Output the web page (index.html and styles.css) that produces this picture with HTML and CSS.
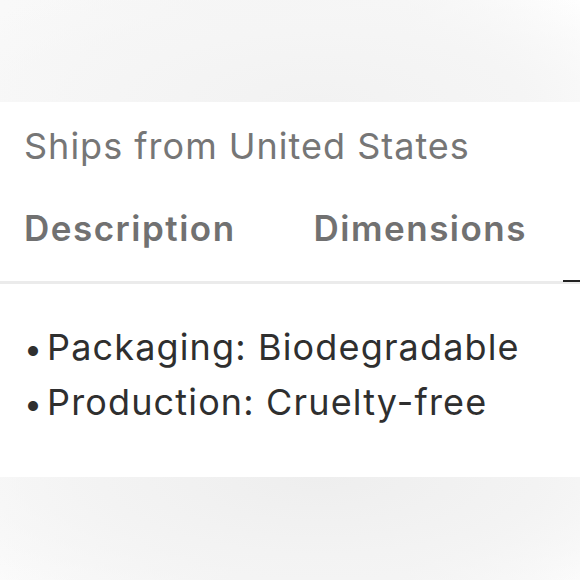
FILE: index.html
```html
<!DOCTYPE html>
<html>
<head>
<meta charset="utf-8">
<link rel="stylesheet" href="styles.css">
</head>
<body>
<div class="page">
  <div class="band band-top"></div>
  <section class="card">
    <p class="ships">Ships from United States</p>
    <nav class="tabs">
      <span class="tab">Description</span>
      <span class="tab">Dimensions</span>
    </nav>
    <div class="divider"><span class="active-line"></span></div>
    <ul class="specs">
      <li><span class="dot">•</span>Packaging: Biodegradable</li>
      <li><span class="dot">•</span>Production: Cruelty-free</li>
    </ul>
  </section>
  <div class="band band-bottom"></div>
</div>
</body>
</html>
```
FILE: styles.css
```css
html, body {
  margin: 0;
  padding: 0;
  background: #ffffff;
}
.page {
  width: 580px;
  height: 580px;
  display: flex;
  flex-direction: column;
  overflow: hidden;
  font-family: "Inter", "Liberation Sans", sans-serif;
}
.band {
  flex: none;
}
.band-top {
  height: 102px;
  background:
    radial-gradient(ellipse 70% 140% at 55% 100%, #f2f2f2 0%, #f5f5f5 50%, rgba(255,255,255,0) 100%),
    linear-gradient(90deg, #f9f9f9 0%, #f6f6f6 40%, #f7f7f7 70%, #ffffff 100%);
}
.band-bottom {
  height: 103px;
  background:
    radial-gradient(ellipse 75% 150% at 55% 0%, #eeeeee 0%, #f3f3f3 50%, rgba(255,255,255,0) 100%),
    linear-gradient(90deg, #fbfbfb 0%, #f6f6f6 40%, #f6f6f6 70%, #fdfdfd 100%);
}
.card {
  flex: 1;
  background: #ffffff;
  display: flex;
  flex-direction: column;
}
.ships {
  margin: 22px 0 0 24px;
  font-size: 36px;
  line-height: 44px;
  letter-spacing: 1px;
  color: #767676;
  font-weight: 400;
}
.tabs {
  display: flex;
  gap: 78px;
  margin: 38px 0 0 24px;
}
.tab {
  font-size: 35px;
  line-height: 44px;
  font-weight: 600;
  letter-spacing: 1.5px;
  color: #717171;
}
.divider {
  margin-top: 31px;
  height: 3px;
  background: #ebebeb;
  position: relative;
}
.active-line {
  position: absolute;
  right: 0;
  top: -1px;
  width: 17px;
  height: 2px;
  background: #222222;
}
.specs {
  list-style: none;
  margin: 36px 0 0 24px;
  padding: 0;
}
.specs li {
  font-size: 36px;
  line-height: 55px;
  height: 55px;
  letter-spacing: 1.15px;
  color: #2f2f2f;
  white-space: nowrap;
}
.dot {
  display: inline-block;
  font-size: 32px;
  line-height: 1;
  width: 23px;
  letter-spacing: 0;
}
```
